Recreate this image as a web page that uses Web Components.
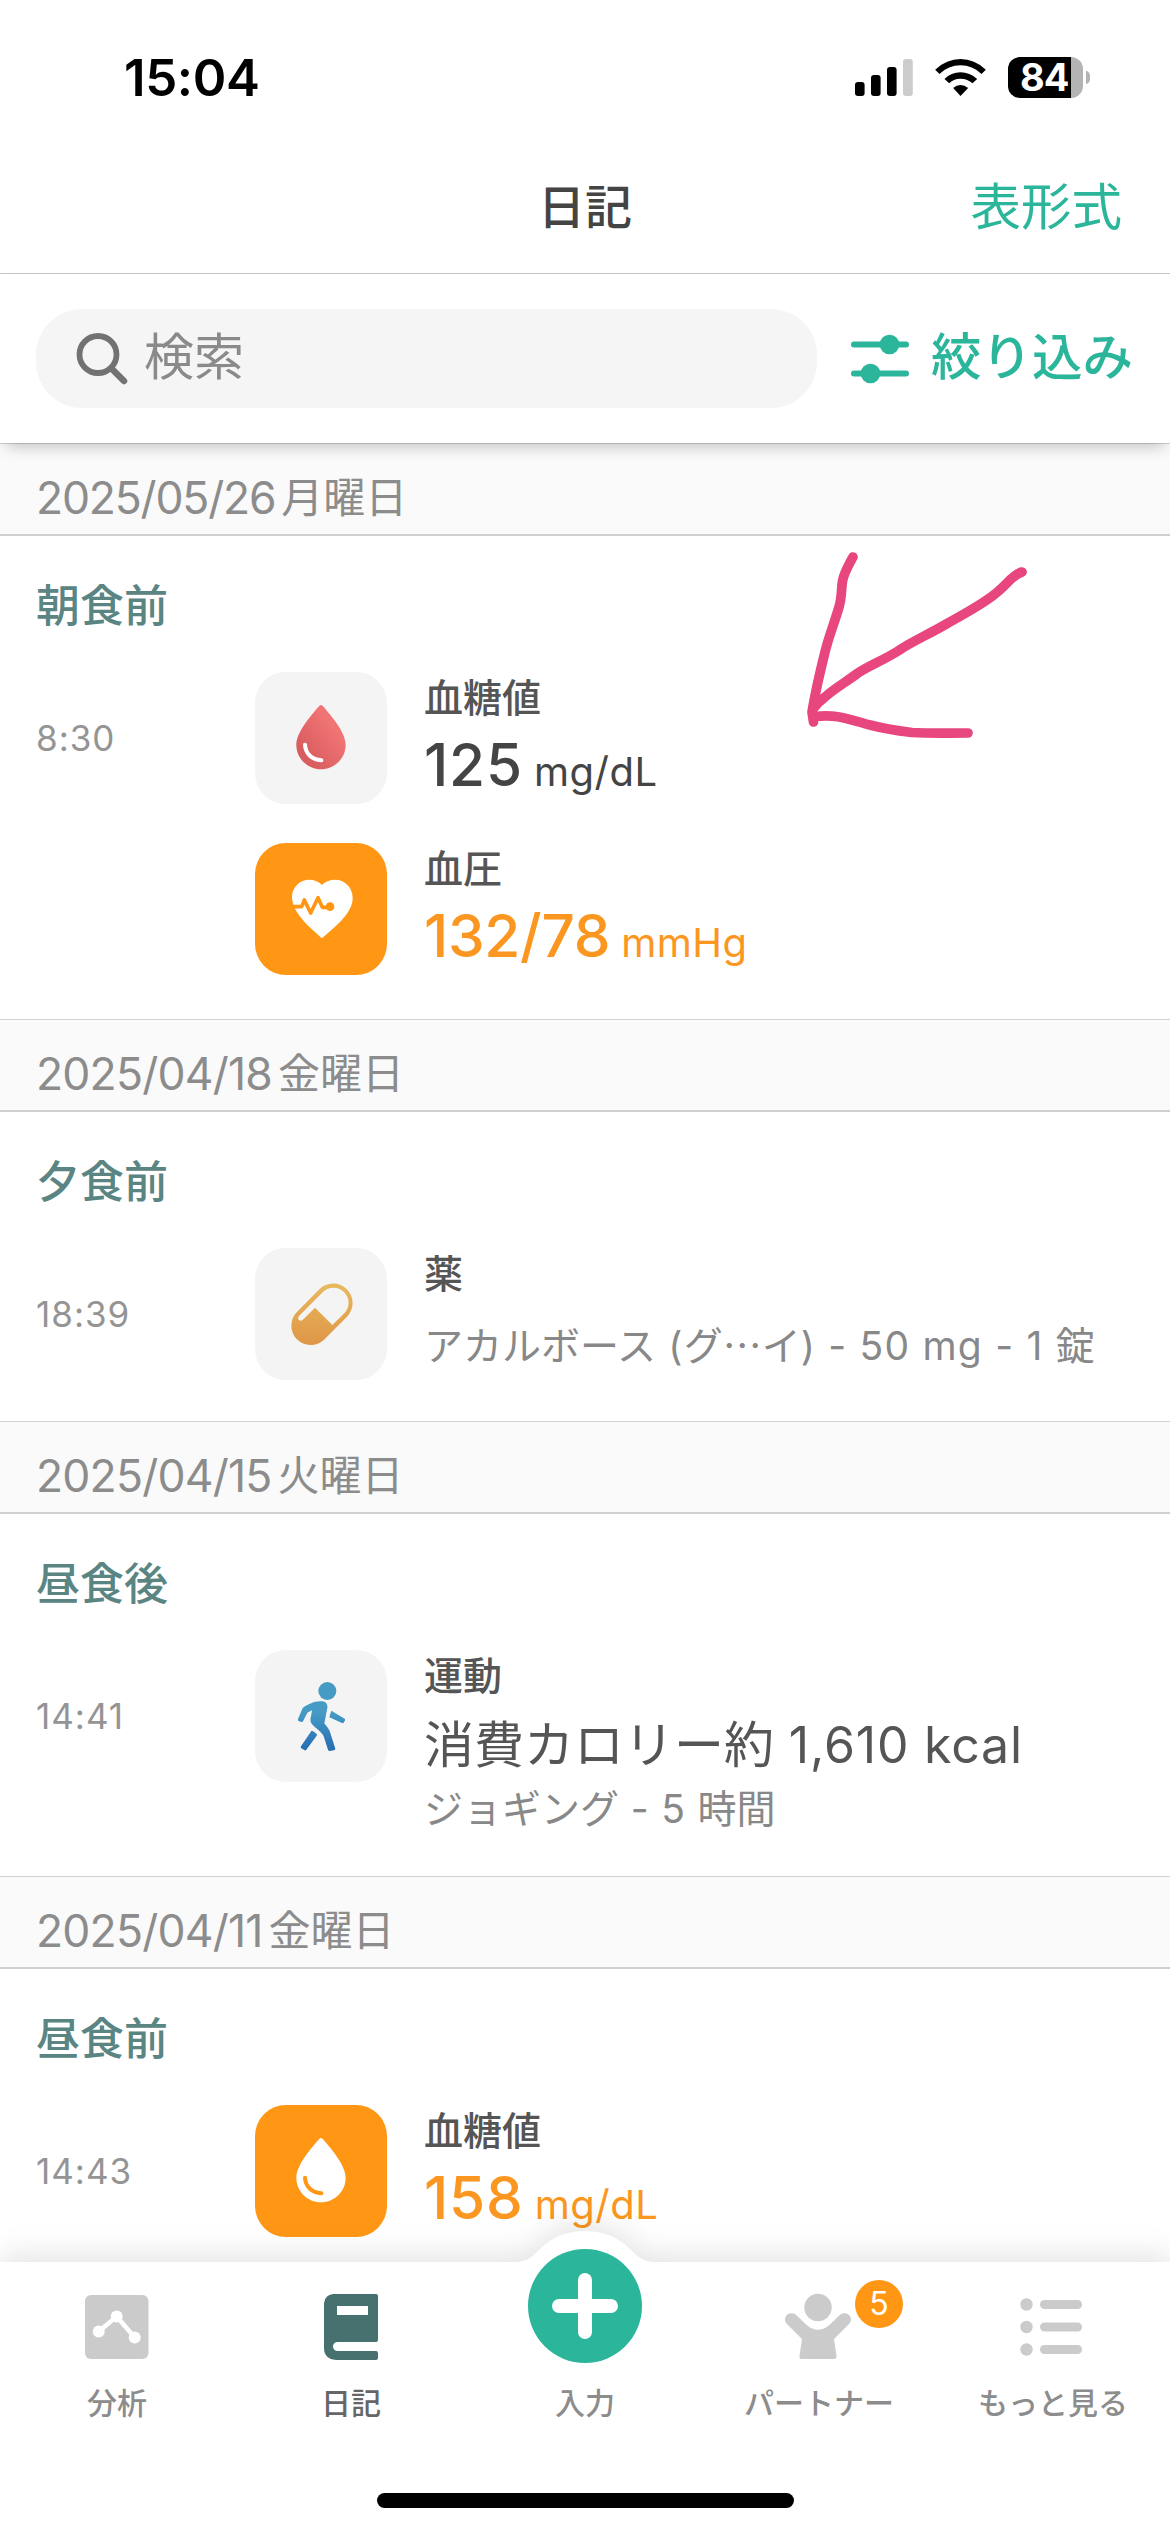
<!DOCTYPE html>
<html lang="ja">
<head>
<meta charset="utf-8">
<title>日記</title>
<style>
html,body{margin:0;background:#fff}
body{width:1170px;height:2532px;overflow:hidden;font-family:Inter,"Noto Sans CJK JP",sans-serif;color:#4a4a4a}
</style>
</head>
<body>
<diary-app></diary-app>
<script>
const define=(name,html)=>customElements.define(name,class extends HTMLElement{
  connectedCallback(){
    if(this.shadowRoot)return;
    const t=document.createElement('template');
    t.innerHTML=typeof html==='function'?html(this):html;
    this.attachShadow({mode:'open'}).append(t.content.cloneNode(true));
  }
});

define('status-bar',`
<style>
:host{display:flex;height:141px;align-items:flex-start;box-sizing:border-box;padding:48px 80px 0 124px;color:#000}
.time{font-size:51px;font-weight:600;line-height:60px;letter-spacing:-.4px;flex:1}
.sig{margin-top:11px;width:58px;height:37px}
.wifi{margin-top:11px;margin-left:22px;width:51px;height:37px}
.bat{margin-top:9px;margin-left:22px;display:flex;align-items:center}
.body{width:75px;height:41px;border-radius:12px;background:linear-gradient(90deg,#000 63px,#b4b4b4 63px);color:#fff;font-size:38px;font-weight:700;line-height:41px;box-sizing:border-box;padding-left:12px;letter-spacing:-1px}
.cap{margin-left:3px;width:4px;height:13px;background:#b4b4b4;border-radius:0 5px 5px 0/0 6px 6px 0}
</style>
<div class="time">15:04</div>
<svg class="sig" viewBox="0 0 58 37"><rect y="23" width="9.6" height="14" rx="3"/><rect x="16" y="16" width="9.6" height="21" rx="3"/><rect x="32" y="8" width="9.6" height="29" rx="3"/><rect x="48" width="9.8" height="37" rx="3" fill="#ccc"/></svg>
<svg class="wifi" viewBox="348 87 152 111"><path d="M348 119Q382 87 424 87T500 119L487 132Q460 106 424 106T361 132Z"/><path d="M376 147Q396 127 424 127T474 147L460 160Q446 146 424 146T390 160Z"/><path d="M402 174Q412 165 424 165T447 174L424 198Z"/></svg>
<div class="bat"><div class="body">84</div><div class="cap"></div></div>`);

define('nav-bar',`
<style>
:host{display:grid;grid-template-columns:1fr auto 1fr;align-items:center;height:133px;box-sizing:border-box;border-bottom:1px solid #c6c6c6;padding:0 48px}
h1{grid-column:2;margin:0;font-size:47px;font-weight:500;line-height:60px;color:#444}
.act{justify-self:end;font-size:50.500px;line-height:60px;color:#2bb59b}
</style><h1><slot></slot></h1><div class="act"><slot name="action"></slot></div>`);

define('search-row',`
<style>
:host{display:flex;align-items:center;height:169px;box-sizing:border-box;padding:0 36px;background:#fff;position:relative;z-index:2;box-shadow:0 9px 15px -6px rgba(0,0,0,.24)}
.box{display:flex;align-items:center;width:781px;height:99px;border-radius:46px;background:#f5f5f5;box-sizing:border-box;padding-left:40px;font-size:50px;color:#8a8a8a}
.box svg{width:52px;height:52px;margin-right:16px}
.filter{display:flex;align-items:center;margin-left:34px;font-size:50.5px;font-weight:500;color:#2bb59b;white-space:nowrap}
.filter svg{width:58px;height:52px;margin-right:22px}
span{line-height:60px;padding-bottom:3px}
</style>
<div class="box"><svg viewBox="0 0 52 52" fill="none" stroke="#727272" stroke-linecap="round"><circle cx="22" cy="21.500" r="18.500" stroke-width="5.800"/><path d="M36 36L48 48" stroke-width="6.500"/></svg><span>検索</span></div>
<div class="filter"><svg viewBox="0 0 58 52" stroke="#2bb59b" fill="#2bb59b" stroke-width="6" stroke-linecap="round"><path d="M3 11.500H55M3 40.500H55"/><circle cx="38.500" cy="11.500" r="9.800" stroke="none"/><circle cx="19.500" cy="40.500" r="9.800" stroke="none"/></svg><span>絞り込み</span></div>`);

define('day-group',el=>`
<style>
:host{display:block}
.date{display:flex;height:93px;box-sizing:border-box;border-top:1px solid #d2d2d2;border-bottom:2px solid #d0d0d0;background:#fafafa;padding:19px 36px 0;font-size:44.500px;line-height:70px;color:#8c8c8c;white-space:nowrap}
.num{letter-spacing:var(--ls,-.8px)}
.day{margin-left:6px;font-size:42px}
.body{height:${el.getAttribute('height')}px;box-sizing:border-box;padding:40px 36px 0;background:#fff}
.meal{font-size:44px;font-weight:500;line-height:60px;margin-bottom:36px;color:#5a8583}
.row{display:grid;grid-template-columns:219px 1fr}
.time{height:132px;display:flex;align-items:center;font-size:35px;letter-spacing:1px;color:#949494}
.items{display:flex;flex-direction:column;gap:39px}
</style>
<div class="date"><span class="num">${el.getAttribute('date')}</span><span class="day">${el.getAttribute('day')}</span></div>
<div class="body"><div class="meal">${el.getAttribute('meal')}</div>
<div class="row"><div class="time">${el.getAttribute('time')}</div><div class="items"><slot></slot></div></div></div>`);

const drop=(fill,shine)=>`<path d="M198 99C201 99 204 102 206 105C230 133 272 181 272 219C272 259 238 292 198 292C158 292 124 259 124 219C124 181 166 133 190 105C192 102 195 99 198 99Z" fill="${fill}"/><path d="M150 218C151 244 170 263 199 265" fill="none" stroke="${shine}" stroke-width="12" stroke-linecap="round"/>`;
const icons={
drop:`<defs><linearGradient id="g" x1="1" y1="0" x2="0" y2="1"><stop offset=".3" stop-color="#f07474"/><stop offset=".8" stop-color="#d95d5f"/></linearGradient></defs>${drop('url(#g)','#fff')}`,
dropw:drop('#fff','#ff9715'),
heart:`<path d="M201 286C170 257 111 212 111 162C111 132 135 110 163 110C178 110 192 116 201 126C210 116 224 110 240 110C269 110 293 133 293 165C293 213 236 254 201 286Z" fill="#fff"/><path d="M108 191H140L148 171L167 210L189 164L202 193H224" fill="none" stroke="#ff9715" stroke-width="11" stroke-linejoin="round"/><circle cx="225" cy="191" r="13" fill="#ff9715"/>`,
pill:`<defs><linearGradient id="g" x1="0" y1="0" x2="0" y2="1"><stop stop-color="#e8b95e"/><stop offset="1" stop-color="#df9646"/></linearGradient></defs><path d="M193 124A58 58 0 0 1 276 206L207 275A58 58 0 0 1 125 193ZM203 133L132 204C127 209 130 218 137 218C140 218 143 216 145 214L180 179L232 231L268 196A45 45 0 0 0 203 133Z" fill="url(#g)" fill-rule="evenodd"/>`,
walk:`<defs><linearGradient id="g" gradientUnits="userSpaceOnUse" x1="0" y1="130" x2="0" y2="295"><stop stop-color="#469bc4"/><stop offset=".35" stop-color="#469bc4"/><stop offset="1" stop-color="#286fb4"/></linearGradient></defs><g fill="url(#g)"><circle cx="217" cy="123" r="27"/><path d="M143 174C160 162 179 153 198 154C212 154 219 162 217 174L208 220C216 230 223 238 226 249L241 296Q241 300 237 301L224 303Q220 303 219 299L206 259C202 248 183 235 174 226C164 216 166 207 168 199L171 181L157 188L144 214Q142 217 138 216L130 212Q128 210 129 207Z"/><path d="M229 182L269 206Q271 208 270 211L266 218Q264 220 261 219L223 202Z"/><path d="M169 243Q172 242 175 244L185 252Q187 254 185 257L154 299Q152 302 149 301L139 295Q136 293 138 289Z"/></g>`};
define('entry-item',el=>`
<style>
:host{display:grid;grid-template-columns:132px 1fr;column-gap:37px;height:132px;white-space:nowrap}
.tile{width:132px;height:132px;border-radius:31px;background:${el.hasAttribute('alert')?'#ff9715':'#f4f4f4'}}
.label{font-size:39px;font-weight:500;line-height:52px;color:#555}
.val{display:flex;align-items:baseline;line-height:81px;color:${el.hasAttribute('alert')?'#fb9720':'#444'}}
.val b{font-size:58.500px;font-weight:500;letter-spacing:var(--vls,.8px)}
.val span{font-size:40px;margin-left:11px;letter-spacing:.5px}
</style>
<svg class="tile" viewBox="0 0 396 396">${icons[el.getAttribute('icon')]}</svg>
<div><div class="label">${el.getAttribute('label')}</div>
${el.hasAttribute('value')?`<div class="val"><b>${el.getAttribute('value')}</b><span>${el.getAttribute('unit')}</span></div>`:''}<slot></slot></div>`);

define('entry-note',`
<style>
:host{display:block;font-size:39px;line-height:52px;margin-top:var(--mt,17px);color:#888}
:host([big]){font-size:50px;line-height:62px;--mt:12px;color:#555}
</style><slot></slot>`);

define('pink-arrow',`
<style>:host{position:absolute;left:800px;top:545px;z-index:3}svg{display:block}</style>
<svg width="240" height="205" viewBox="800 545 240 205" fill="none" stroke="#e8467f" stroke-width="9.700" stroke-linecap="round" stroke-linejoin="round"><path d="M853 557C848 566 844 573 842.500 581C841 591 842 597 839 607C834 624 829 636 825 652C821 668 814 700 812 712L813.500 722"/><path d="M1022 572C1012 575 1008 584 995 594C984 603 968 612 948 623C928 635 912 641 898 651C884 660 870 665 858 673C846 682 835 688 825 697Q818 702 813 709"/><path d="M815 716.500C835 714 845 718 870 725C885 729 900 731 912 732.500C930 733.500 945 733 968 733"/></svg>`);

define('tab-item',el=>`
<style>
:host{display:flex;flex-direction:column;align-items:center;position:relative;width:234px;font-size:30px;font-weight:500;color:${el.hasAttribute('active')?'#666':'#8c8c8c'};white-space:nowrap}
.ic{width:120px;height:120px;margin-top:4px;overflow:visible}
.l{line-height:36px;margin-top:-1px}
.badge{position:absolute;left:153px;top:18px;width:48px;height:48px;border-radius:50%;background:#ff9715;color:#fff;font-size:32px;font-weight:400;line-height:48px;text-align:center}
</style>
<svg class="ic" viewBox="0 0 120 120">${tabIcons[el.getAttribute('icon')]}</svg><div class="l"><slot></slot></div>
${el.hasAttribute('badge')?`<div class="badge">${el.getAttribute('badge')}</div>`:''}`);

/* Tab icons share a 120px canvas whose centre sits 64px below the bar's top edge */
const tabIcons={
chart:`<rect x="28" y="29" width="63.500" height="64" rx="6" fill="#cbcbcb"/><path d="M41.700 65.500L59.700 50.500L77.700 71.500" fill="none" stroke="#fff" stroke-width="4.500"/><g fill="#fff"><circle cx="41.700" cy="65.500" r="6"/><circle cx="59.700" cy="50.500" r="6"/><circle cx="77.700" cy="71.500" r="6"/></g>`,
book:`<path d="M42 28H85Q87 28 87 30V74Q87 76 85 76H46.500A4.500 4.500 0 0 0 46.500 85H85Q87 85 87 87V92Q87 94 85 94H45Q33 93 33 82V37Q34 29 42 28ZM46 40V49H77V40Z" fill="#46716f" fill-rule="evenodd"/>`,
plus:`<circle cx="60" cy="40" r="57" fill="#2bb59b"/><path d="M60 14V66M34 40H86" stroke="#fff" stroke-width="14" stroke-linecap="round"/>`,
partner:`<g fill="#cbcbcb"><circle cx="59" cy="41.500" r="13.700"/><path d="M28 58C23 53 28 45 36 48C41 52 45 57 49 60C55 65 63 65 69 60C73 57 77 52 82 48C90 45 95 53 90 58L75 73L77.500 90Q77.500 93 75 93H42.500Q40 93 40.500 90L43 73Z"/></g>`,
list:`<g fill="#cbcbcb"><circle cx="33.500" cy="38.500" r="6.200"/><circle cx="33.500" cy="61" r="6.200"/><circle cx="33.500" cy="83.500" r="6.200"/><rect x="47" y="34" width="42" height="9" rx="4.500"/><rect x="47" y="56.500" width="42" height="9" rx="4.500"/><rect x="47" y="79" width="42" height="9" rx="4.500"/></g>`};

define('tab-bar',`
<style>
:host{display:block;height:270px;position:relative;z-index:4}
.bg{position:absolute;left:0;top:-31px;overflow:visible;filter:drop-shadow(0 -8px 14px rgba(0,0,0,.1))}
.tabs{display:flex;position:relative;height:231px}
.home{position:relative;width:417px;height:15px;border-radius:8px;background:#000;margin:0 auto}
</style>
<svg class="bg" width="1170" height="301"><path d="M0 31H515C527 31 533 25 540 18C552 6 567 0 585 0S618 6 630 18C637 25 643 31 655 31H1170V301H0Z" fill="#fff"/></svg>
<div class="tabs">
<tab-item icon="chart">分析</tab-item><tab-item icon="book" active>日記</tab-item><tab-item icon="plus">入力</tab-item><tab-item icon="partner" badge="5">パートナー</tab-item><tab-item icon="list">もっと見る</tab-item>
</div><div class="home"></div>`);

define('diary-app',`
<style>
:host{display:flex;flex-direction:column;width:1170px;height:2532px;position:relative;overflow:hidden;background:#fff}
main{flex:1;min-height:0;overflow:hidden}
.cjk{font-family:"Noto Sans CJK JP",sans-serif}
.en{letter-spacing:1.2px}
.k{letter-spacing:.8px}
</style>
<status-bar></status-bar>
<nav-bar>日記<span slot="action">表形式</span></nav-bar>
<search-row></search-row>
<main>
<day-group date="2025/05/26" day="月曜日" meal="朝食前" time="8:30" height="483" style="--ls:-1.2px">
<entry-item icon="drop" label="血糖値" value="125" unit="mg/dL"></entry-item>
<entry-item icon="heart" label="血圧" value="132/78" unit="mmHg" alert style="--vls:-.3px"></entry-item>
</day-group>
<day-group date="2025/04/18" day="金曜日" meal="夕食前" time="18:39" height="309">
<entry-item icon="pill" label="薬"><entry-note>アカルボース<span class="en"> (</span>グ<span class="cjk">…</span>イ<span class="en">) - 50 mg - 1 </span>錠</entry-note></entry-item>
</day-group>
<day-group date="2025/04/15" day="火曜日" meal="昼食後" time="14:41" height="362">
<entry-item icon="walk" label="運動"><entry-note big>消費カロリー約<span class="k"> 1,610 kcal</span></entry-note><entry-note style="--mt:7px">ジョギング<span class="k"> - 5 </span>時間</entry-note></entry-item>
</day-group>
<day-group date="2025/04/11" day="金曜日" meal="昼食前" time="14:43" height="400">
<entry-item icon="dropw" label="血糖値" value="158" unit="mg/dL" alert></entry-item>
</day-group>
</main>
<tab-bar></tab-bar>
<pink-arrow></pink-arrow>`);
</script>
</body>
</html>
